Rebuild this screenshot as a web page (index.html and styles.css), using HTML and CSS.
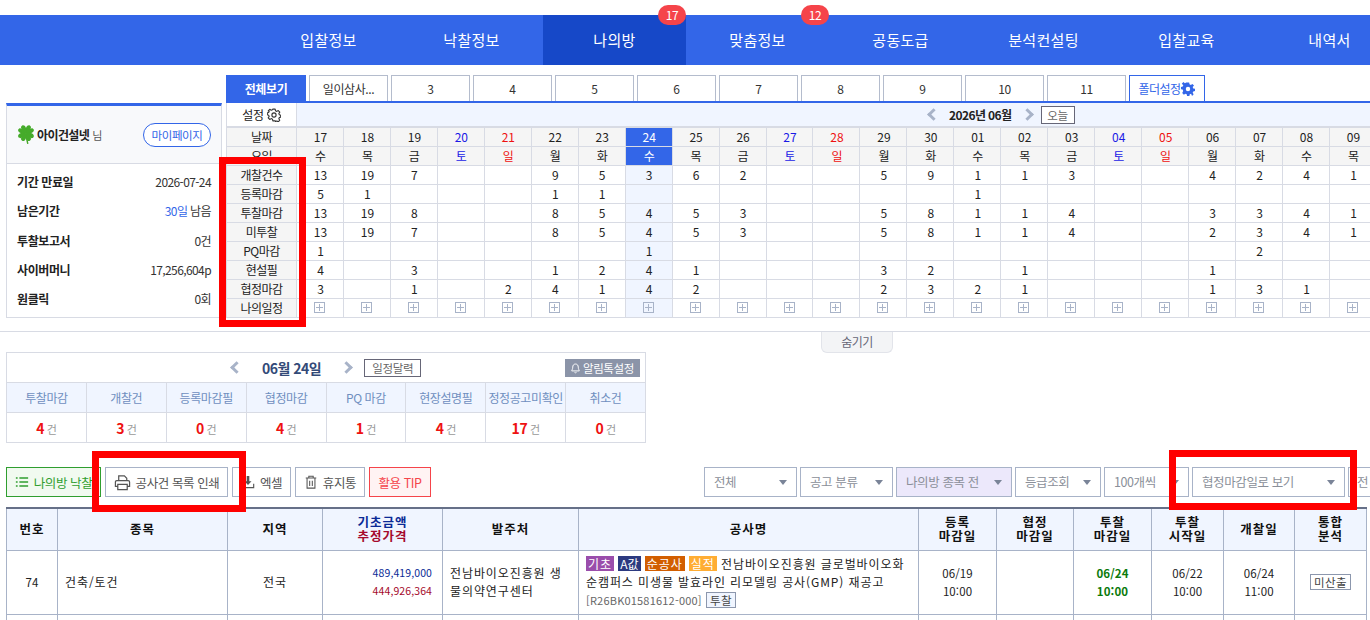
FILE: index.html
```html
<!DOCTYPE html>
<html lang="ko">
<head>
    <meta charset="UTF-8">
    <meta name="viewport" content="width=device-width, initial-scale=1.0">
    <title>나의방</title>
    <link rel="stylesheet" href="styles.css">
</head>
<body>
    <nav class="gnb">
        <a class="gnb-item">입찰정보</a>
        <a class="gnb-item">낙찰정보</a>
        <a class="gnb-item active">나의방<span class="gnb-badge">17</span></a>
        <a class="gnb-item">맞춤정보<span class="gnb-badge">12</span></a>
        <a class="gnb-item">공동도급</a>
        <a class="gnb-item">분석컨설팅</a>
        <a class="gnb-item">입찰교육</a>
        <a class="gnb-item">내역서</a>
    </nav>

    <section class="top">
        <aside class="profile">
            <div class="profile-head">
                <svg class="clover" viewBox="-10 -10 20 23" width="18" height="21">
                    <path d="M0 0 Q.5 6 2 12" fill="none" stroke="#4aa82c" stroke-width="1.600"/>
                    <g fill="#45ab2a">
                        <path transform="rotate(45)" d="M0 0C-5-3-6-8-3-9-1.500-9.500 0-8.500 0-7 0-8.500 1.500-9.500 3-9 6-8 5-3 0 0z"/>
                        <path transform="rotate(135)" d="M0 0C-5-3-6-8-3-9-1.500-9.500 0-8.500 0-7 0-8.500 1.500-9.500 3-9 6-8 5-3 0 0z"/>
                        <path transform="rotate(225)" d="M0 0C-5-3-6-8-3-9-1.500-9.500 0-8.500 0-7 0-8.500 1.500-9.500 3-9 6-8 5-3 0 0z"/>
                        <path transform="rotate(315)" d="M0 0C-5-3-6-8-3-9-1.500-9.500 0-8.500 0-7 0-8.500 1.500-9.500 3-9 6-8 5-3 0 0z"/>
                    </g>
                </svg>
                <strong class="profile-name">아이건설넷</strong>
                <span class="profile-sir">님</span>
                <a class="mypage-btn">마이페이지</a>
            </div>
            <dl class="profile-list">
                <div class="profile-row"><dt>기간 만료일</dt><dd>2026-07-24</dd></div>
                <div class="profile-row"><dt>남은기간</dt><dd><span class="blue-txt">30일</span> 남음</dd></div>
                <div class="profile-row"><dt>투찰보고서</dt><dd>0건</dd></div>
                <div class="profile-row"><dt>사이버머니</dt><dd>17,256,604p</dd></div>
                <div class="profile-row"><dt>원클릭</dt><dd>0회</dd></div>
            </dl>
        </aside>

        <div class="calendar-wrap">
            <div class="tabs">
                <a class="tab on">전체보기</a>
                <a class="tab">일이삼사...</a>
                <a class="tab">3</a>
                <a class="tab">4</a>
                <a class="tab">5</a>
                <a class="tab">6</a>
                <a class="tab">7</a>
                <a class="tab">8</a>
                <a class="tab">9</a>
                <a class="tab">10</a>
                <a class="tab">11</a>
                <a class="tab folder">폴더설정
                    <svg viewBox="0 0 24 24" width="14" height="14"><path fill="#3366e8" fill-rule="evenodd" d="M10 1h4l.6 3 2.300 1 2.600-1.700 2.800 2.800L20 8.700l1 2.300 3 .6v4l-3 .6-1 2.300 1.700 2.600-2.800 2.800L17.300 20l-2.300 1-.6 3h-4l-.6-3-2.300-1-2.600 1.700-2.800-2.800L3.800 15.300l-1-2.300-2.800-.6v-4l3-.6 1-2.300L1.300 3l2.800-2.800L6.700 2l2.300-1zM12 8.200a3.800 3.800 0 1 0 0 7.600 3.800 3.800 0 0 0 0-7.600z"/></svg>
                </a>
            </div>
            <div class="cal-scroll">
                <div class="cal-bar">
                    <div class="cal-setting">설정
                        <svg viewBox="0 0 24 24" width="14" height="14"><path fill="none" stroke="#333" stroke-width="1.900" stroke-linejoin="round" d="M10 2h4l.6 2.800 2.200 1 2.500-1.500 2.600 2.800-1.600 2.400.9 2.200 2.300.6v3.400l-2.300.6-.9 2.200 1.600 2.400-2.600 2.800-2.500-1.500-2.200 1L14 22h-4l-.6-2.800-2.200-1-2.500 1.500-2.600-2.800 1.600-2.400-.9-2.200-2.300-.6v-3.400l2.300-.6.900-2.200L2.100 5.100l2.600-2.800 2.500 1.500 2.200-1z"/><circle cx="12" cy="12" r="3.600" fill="none" stroke="#333" stroke-width="1.900"/></svg>
                    </div>
                    <div class="cal-month">
                        <span class="arrow"></span>
                        <strong class="cal-title">2026년 06월</strong>
                        <span class="arrow next"></span>
                        <a class="box-btn">오늘</a>
                    </div>
                </div>
                <table class="cal">
                    <colgroup><col class="cal-label-col"></colgroup>
                    <tr class="cal-head">
                        <th>날짜</th><td>17</td><td>18</td><td>19</td><td class="sat">20</td><td class="sun">21</td><td>22</td><td>23</td><td class="today">24</td><td>25</td><td>26</td><td class="sat">27</td><td class="sun">28</td><td>29</td><td>30</td><td>01</td><td>02</td><td>03</td><td class="sat">04</td><td class="sun">05</td><td>06</td><td>07</td><td>08</td><td>09</td>
                    </tr>
                    <tr class="cal-head">
                        <th>요일</th><td>수</td><td>목</td><td>금</td><td class="sat">토</td><td class="sun">일</td><td>월</td><td>화</td><td class="today">수</td><td>목</td><td>금</td><td class="sat">토</td><td class="sun">일</td><td>월</td><td>화</td><td>수</td><td>목</td><td>금</td><td class="sat">토</td><td class="sun">일</td><td>월</td><td>화</td><td>수</td><td>목</td>
                    </tr>
                    <tr>
                        <th>개찰건수</th><td>13</td><td>19</td><td>7</td><td></td><td></td><td>9</td><td>5</td><td class="now">3</td><td>6</td><td>2</td><td></td><td></td><td>5</td><td>9</td><td>1</td><td>1</td><td>3</td><td></td><td></td><td>4</td><td>2</td><td>4</td><td>1</td>
                    </tr>
                    <tr>
                        <th>등록마감</th><td>5</td><td>1</td><td></td><td></td><td></td><td>1</td><td>1</td><td class="now"></td><td></td><td></td><td></td><td></td><td></td><td></td><td>1</td><td></td><td></td><td></td><td></td><td></td><td></td><td></td><td></td>
                    </tr>
                    <tr>
                        <th>투찰마감</th><td>13</td><td>19</td><td>8</td><td></td><td></td><td>8</td><td>5</td><td class="now">4</td><td>5</td><td>3</td><td></td><td></td><td>5</td><td>8</td><td>1</td><td>1</td><td>4</td><td></td><td></td><td>3</td><td>3</td><td>4</td><td>1</td>
                    </tr>
                    <tr>
                        <th>미투찰</th><td>13</td><td>19</td><td>7</td><td></td><td></td><td>8</td><td>5</td><td class="now">4</td><td>5</td><td>3</td><td></td><td></td><td>5</td><td>8</td><td>1</td><td>1</td><td>4</td><td></td><td></td><td>2</td><td>3</td><td>4</td><td>1</td>
                    </tr>
                    <tr>
                        <th>PQ마감</th><td>1</td><td></td><td></td><td></td><td></td><td></td><td></td><td class="now">1</td><td></td><td></td><td></td><td></td><td></td><td></td><td></td><td></td><td></td><td></td><td></td><td></td><td>2</td><td></td><td></td>
                    </tr>
                    <tr>
                        <th>현설필</th><td>4</td><td></td><td>3</td><td></td><td></td><td>1</td><td>2</td><td class="now">4</td><td>1</td><td></td><td></td><td></td><td>3</td><td>2</td><td></td><td>1</td><td></td><td></td><td></td><td>1</td><td></td><td></td><td></td>
                    </tr>
                    <tr>
                        <th>협정마감</th><td>3</td><td></td><td>1</td><td></td><td>2</td><td>4</td><td>1</td><td class="now">4</td><td>2</td><td></td><td></td><td></td><td>2</td><td>3</td><td>2</td><td>1</td><td></td><td></td><td></td><td>1</td><td>3</td><td>1</td><td></td>
                    </tr>
                    <tr class="cal-plus">
                        <th>나의일정</th><td><i class="plus"></i></td><td><i class="plus"></i></td><td><i class="plus"></i></td><td><i class="plus"></i></td><td><i class="plus"></i></td><td><i class="plus"></i></td><td><i class="plus"></i></td><td class="now"><i class="plus"></i></td><td><i class="plus"></i></td><td><i class="plus"></i></td><td><i class="plus"></i></td><td><i class="plus"></i></td><td><i class="plus"></i></td><td><i class="plus"></i></td><td><i class="plus"></i></td><td><i class="plus"></i></td><td><i class="plus"></i></td><td><i class="plus"></i></td><td><i class="plus"></i></td><td><i class="plus"></i></td><td><i class="plus"></i></td><td><i class="plus"></i></td><td><i class="plus"></i></td>
                    </tr>
                </table>
            </div>
        </div>
    </section>

    <div class="hide-line"><a class="hide-btn">숨기기</a></div>

    <section class="today-box">
        <div class="today-head">
            <span class="arrow"></span>
            <strong class="today-title">06월 24일</strong>
            <span class="arrow next"></span>
            <a class="box-btn">일정달력</a>
            <a class="alarm-btn">
                <svg viewBox="0 0 16 16" width="11" height="11"><path fill="none" stroke="#fff" stroke-width="1.400" d="M8 1.500c-2.700 0-4 2-4 4.500 0 3-1.500 4.500-1.500 5.500h11c0-1-1.500-2.500-1.500-5.500 0-2.500-1.300-4.500-4-4.500zM6.500 13.500c.4 1 2.600 1 3 0"/></svg>
                알림톡설정
            </a>
        </div>
        <table class="today-table">
            <tr>
                <th>투찰마감</th><th>개찰건</th><th>등록마감필</th><th>협정마감</th><th>PQ 마감</th><th>현장설명필</th><th>정정공고미확인</th><th>취소건</th>
            </tr>
            <tr>
                <td><b>4</b> 건</td><td><b>3</b> 건</td><td><b>0</b> 건</td><td><b>4</b> 건</td><td><b>1</b> 건</td><td><b>4</b> 건</td><td><b>17</b> 건</td><td><b>0</b> 건</td>
            </tr>
        </table>
    </section>

    <section class="toolbar">
        <div class="tool-left">
            <a class="tool-btn green">
                <svg viewBox="0 0 16 16" width="14" height="14"><path fill="none" stroke="#2f9e2f" stroke-width="1.800" d="M1 3.500h2M5 3.500h10M1 8h2M5 8h10M1 12.500h2M5 12.500h10"/></svg>
                나의방 낙찰
            </a>
            <a class="tool-btn print">
                <svg viewBox="0 0 18 18" width="17" height="17"><path fill="none" stroke="#555" stroke-width="1.300" d="M5 7V2h6l2.500 2.500V7M3.500 13H1.500V8.500q0-1.500 1.500-1.500h12q1.500 0 1.500 1.500V13h-2M4 11h10v5.500H4z"/></svg>
                공사건 목록 인쇄
            </a>
            <a class="tool-btn excel">
                <svg viewBox="0 0 16 16" width="14" height="14"><path fill="none" stroke="#555" stroke-width="1.300" d="M1.500 10v4.500h13V10"/><path fill="#555" d="M6.500 1h3v6h2.500L8 11.500 4 7h2.500z"/></svg>
                엑셀
            </a>
            <a class="tool-btn trash">
                <svg viewBox="0 0 16 16" width="14" height="14"><path fill="none" stroke="#555" stroke-width="1.200" d="M2 3.500h12M5.500 3.500V1.500h5v2M3.500 3.500v11.500h9V3.500M6.500 6.500v6M9.500 6.500v6"/></svg>
                휴지통
            </a>
            <a class="tool-btn tip">활용 TIP</a>
        </div>
        <div class="tool-right">
            <div class="sel w93">전체</div>
            <div class="sel w93">공고 분류</div>
            <div class="sel w115 violet">나의방 종목 전</div>
            <div class="sel w86">등급조회</div>
            <div class="sel w85">100개씩</div>
            <div class="sel w153">협정마감일로 보기</div>
            <div class="sel w60">전</div>
        </div>
    </section>

    <table class="list">
        <colgroup>
            <col class="c51"><col class="c170"><col class="c95"><col class="c120"><col class="c136"><col class="c340"><col class="c78"><col class="c77"><col class="c78"><col class="c72"><col class="c71"><col class="c72">
        </colgroup>
        <tr>
            <th>번호</th><th>종목</th><th>지역</th>
            <th><span class="navy-txt">기초금액</span><br><span class="wine-txt">추정가격</span></th>
            <th>발주처</th><th>공사명</th>
            <th>등록<br>마감일</th><th>협정<br>마감일</th><th>투찰<br>마감일</th><th>투찰<br>시작일</th><th>개찰일</th><th>통합<br>분석</th>
        </tr>
        <tr class="list-row">
            <td>74</td>
            <td class="left">건축/토건</td>
            <td class="wide">전국</td>
            <td class="price"><span class="navy-txt">489,419,000</span><br><span class="wine-txt">444,926,364</span></td>
            <td class="left">전남바이오진흥원 생물의약연구센터</td>
            <td class="left title">
                <span class="tag t-purple">기초</span> <span class="tag t-navy">A값</span> <span class="tag t-brown">순공사</span> <span class="tag t-orange">실적</span> 전남바이오진흥원 글로벌바이오화순캠퍼스 미생물 발효라인 리모델링 공사(GMP) 재공고<br>
                <span class="bid-no">[R26BK01581612-000]</span> <span class="bid-tag">투찰</span>
            </td>
            <td>06/19<br>10:00</td>
            <td></td>
            <td class="due">06/24<br>10:00</td>
            <td>06/22<br>10:00</td>
            <td>06/24<br>11:00</td>
            <td><span class="bid-tag plain">미산출</span></td>
        </tr>
        <tr class="list-row">
            <td></td><td></td><td></td><td></td><td></td><td></td><td></td><td></td><td></td><td></td><td></td><td></td>
        </tr>
    </table>

    <!-- 빨간 표시 -->
    <div class="mark mark-a"></div>
    <div class="mark mark-b"></div>
    <div class="mark mark-c"></div>
</body>
</html>
```

FILE: styles.css
```css
* {
    margin: 0;
    padding: 0;
    box-sizing: border-box;
    font-family: "Noto Sans CJK KR", "Noto Sans", sans-serif;
}
html, body {
    width: 1370px;
    height: 620px;
    overflow: hidden;
}
body {
    position: relative;
    background: #fff;
    color: #222;
    font-size: 12px;
    letter-spacing: -0.4px;
}
table {
    border-collapse: collapse;
    table-layout: fixed;
}

/* gnb */
.gnb {
    display: flex;
    margin-top: 15px;
    height: 50px;
    padding-left: 257px;
    background: #3366e8;
}
.gnb-item {
    position: relative;
    flex: 0 0 143px;
    line-height: 50px;
    text-align: center;
    color: #fff;
    font-size: 15px;
    letter-spacing: 0.3px;
}
.gnb-item.active {
    background: #1648c8;
}
.gnb-badge {
    position: absolute;
    top: -10px;
    right: 0;
    width: 28px;
    height: 20px;
    border-radius: 10px;
    background: #f5444a;
    color: #fff;
    font-size: 12px;
    line-height: 20px;
    letter-spacing: -0.5px;
}

/* top */
.top {
    display: flex;
    padding: 10px 0 0 6px;
    height: 266px;
}
.profile {
    flex: 0 0 216px;
    height: 215px;
    margin-top: 28px;
    border: 1px solid #d8dbe4;
    border-top: 3px solid #3366e8;
}
.profile-head {
    display: flex;
    align-items: center;
    height: 58px;
    padding: 0 10px;
    background: #f8f9fb;
    border-bottom: 1px solid #d8dbe4;
}
.clover {
    margin-right: 2px;
}
.profile-name {
    font-size: 12px;
    font-weight: 700;
    letter-spacing: -0.6px;
}
.profile-sir {
    margin-left: 3px;
    color: #555;
    font-size: 11px;
}
.mypage-btn {
    margin-left: auto;
    width: 68px;
    height: 24px;
    border: 1px solid #3366e8;
    border-radius: 12px;
    background: #fff;
    color: #3366e8;
    font-size: 11.5px;
    line-height: 22px;
    text-align: center;
}
.profile-list {
    padding: 3px 10px 0;
}
.profile-row {
    display: flex;
    justify-content: space-between;
    align-items: center;
    height: 29.3px;
}
.profile-row dt {
    font-weight: 700;
    color: #222;
}
.profile-row dd {
    color: #333;
    letter-spacing: -0.6px;
}
.blue-txt {
    color: #3366e8;
}

/* tabs */
.calendar-wrap {
    flex: 1;
    min-width: 0;
    margin-left: 4px;
    overflow: hidden;
}
.tabs {
    display: flex;
    gap: 3px;
    height: 28px;
    border-bottom: 2px solid #3366e8;
}
.tab {
    flex: 0 0 79px;
    height: 26px;
    border: 1px solid #b4bccd;
    border-bottom: 0;
    color: #333;
    line-height: 25px;
    text-align: center;
}
.tab.on {
    flex-basis: 80px;
    border-color: #3366e8;
    background: #3366e8;
    color: #fff;
    font-weight: 700;
}
.tab.folder {
    flex-basis: 76px;
    display: flex;
    align-items: center;
    justify-content: center;
    gap: 1px;
    border-color: #3366e8;
    color: #3366e8;
    letter-spacing: -0.6px;
}
.cal-bar {
    display: flex;
    height: 24px;
    border-bottom: 1px solid #d8dbe4;
}
.cal-setting {
    display: flex;
    align-items: center;
    justify-content: center;
    gap: 3px;
    flex: 0 0 71px;
    background: #fff;
    border-left: 1px solid #d8dbe4;
    border-right: 1px solid #d8dbe4;
}
.cal-month {
    flex: 1;
    display: flex;
    align-items: center;
    padding-left: 632px;
    gap: 11px;
    background: #f0f5ff;
}
.cal-month .box-btn {
    margin-left: -2px;
}
.cal-title {
    flex-shrink: 0;
    font-size: 12px;
    letter-spacing: -0.6px;
    color: #222;
}
.arrow {
    flex-shrink: 0;
    width: 9px;
    height: 9px;
    border-left: 3px solid #a8b3c8;
    border-bottom: 3px solid #a8b3c8;
    transform: rotate(45deg);
}
.arrow.next {
    transform: rotate(225deg);
}
.box-btn {
    flex-shrink: 0;
    width: 34px;
    height: 18px;
    border: 1px solid #667;
    background: #fff;
    color: #666;
    font-size: 11.5px;
    line-height: 16px;
    text-align: center;
}

/* calendar */
.cal {
    width: 1151px;
}
.cal col {
    width: 47px;
}
.cal .cal-label-col {
    width: 70px;
}
.cal th, .cal td {
    height: 19px;
    border: 1px solid #d8dbe4;
    font-size: 12px;
    font-weight: 400;
    line-height: 16px;
    text-align: center;
    letter-spacing: 0;
    overflow: hidden;
    padding: 0;
}
.cal td {
    padding-left: 1px;
}
.cal th {
    background: #f5f5f5;
    letter-spacing: -0.5px;
}
.cal-head td {
    background: #f5f5f5;
}
.cal-head td.today {
    background: #3366e8;
    color: #fff;
}
.cal-head td.sat {
    color: #1a1ae6;
}
.cal-head td.sun {
    color: #ee1111;
}
.cal td.now {
    background: #f0f5ff;
}
.plus {
    display: block;
    position: relative;
    width: 11px;
    height: 11px;
    margin: 0 auto 1px;
    border: 1px solid #a8b3c8;
    transform: translateX(-1px);
}
.plus::before, .plus::after {
    content: "";
    position: absolute;
    background: #a8b3c8;
}
.plus::before {
    left: 1px;
    right: 1px;
    top: 4px;
    height: 1px;
}
.plus::after {
    top: 1px;
    bottom: 1px;
    left: 4px;
    width: 1px;
}

/* hide */
.hide-line {
    height: 21px;
    border-top: 1px solid #d8dbe4;
    display: flex;
    justify-content: flex-start;
    padding-left: 821px;
}
.hide-btn {
    width: 72px;
    height: 21px;
    border: 1px solid #e2e4ea;
    border-top: 0;
    border-radius: 0 0 6px 6px;
    background: #f3f4f6;
    color: #667;
    font-size: 12px;
    letter-spacing: -0.6px;
    line-height: 19px;
    text-align: center;
}

/* today */
.today-box {
    width: 640px;
    height: 91px;
    margin-left: 6px;
    border: 1px solid #d8dbe4;
    border-bottom: 0;
}
.today-head {
    position: relative;
    display: flex;
    align-items: center;
    gap: 21px;
    height: 29px;
    padding-left: 225px;
}
.today-title {
    flex-shrink: 0;
    color: #334a78;
    font-size: 14px;
    letter-spacing: -0.5px;
}
.today-head .box-btn {
    width: 57px;
    margin-left: -8px;
}
.alarm-btn {
    position: absolute;
    right: 5px;
    top: 6px;
    display: flex;
    align-items: center;
    gap: 2px;
    width: 75px;
    height: 18px;
    padding-left: 5px;
    background: #8b94a8;
    color: #fff;
    font-size: 11.5px;
    letter-spacing: -0.4px;
}
.today-table {
    width: 640px;
    margin-left: -1px;
}
.today-table th, .today-table td {
    height: 30px;
    border: 1px solid #d8dbe4;
    text-align: center;
}
.today-table th {
    background: #f0f5ff;
    color: #6f8fc0;
    font-size: 12px;
    font-weight: 400;
}
.today-table td {
    color: #999;
    font-size: 11px;
}
.today-table b {
    color: #ee1111;
    font-size: 14px;
}

/* toolbar */
.toolbar {
    display: flex;
    justify-content: space-between;
    height: 30px;
    margin: 24px 0 10px 6px;
}
.tool-left, .tool-right {
    display: flex;
}
.tool-left {
    gap: 4px;
}
.tool-right {
    gap: 3px;
    width: 666px;
    flex: 0 0 666px;
    overflow: hidden;
}
.tool-btn {
    display: flex;
    align-items: center;
    justify-content: center;
    gap: 5px;
    height: 30px;
    border: 1px solid #a8b3c8;
    color: #555;
    font-size: 12.5px;
}
.tool-btn.green {
    width: 95px;
    border-color: #2f9e2f;
    background: #f1faf0;
    color: #2f9e2f;
    white-space: nowrap;
}
.tool-btn.print {
    width: 123px;
}
.tool-btn.excel {
    width: 59px;
}
.tool-btn.trash {
    width: 70px;
}
.tool-btn.tip {
    width: 62px;
    border-color: #f5444a;
    background: #fff3f3;
    color: #f5444a;
}
.sel {
    position: relative;
    flex-shrink: 0;
    height: 30px;
    padding-left: 9px;
    border: 1px solid #a8b3c8;
    color: #8a8f99;
    font-size: 12.5px;
    line-height: 28px;
    white-space: nowrap;
}
.sel::after {
    content: "";
    position: absolute;
    right: 9px;
    top: 12px;
    border: 4px solid transparent;
    border-top: 5px solid #7a8498;
    border-bottom: 0;
}
.sel.violet {
    background: #ece8fb;
}
.w93 { width: 93px; }
.w115 { width: 116px; }
.w86 { width: 86px; }
.w85 { width: 85px; }
.w153 { width: 153px; }
.w60 { width: 60px; padding-left: 8px; }

/* list */
.list {
    width: 1360px;
    margin-left: 6px;
}
.c51 { width: 51px; }
.c170 { width: 170px; }
.c95 { width: 95px; }
.c120 { width: 120px; }
.c136 { width: 136px; }
.c340 { width: 340px; }
.c78 { width: 78px; }
.c77 { width: 77px; }
.c72 { width: 72px; }
.c71 { width: 71px; }
.list th, .list td {
    border: 1px solid #a8b3c8;
    text-align: center;
    padding: 0;
}
.list th {
    height: 42px;
    border-top: 2px solid #667088;
    background: #f0f5ff;
    color: #111;
    font-size: 12.5px;
    line-height: 14px;
    font-weight: 700;
    letter-spacing: 1px;
}
.list-row td {
    height: 64px;
    font-size: 11.5px;
    line-height: 18px;
    letter-spacing: 0.1px;
    color: #222;
}
.list-row td.left, .list-row td.wide {
    font-size: 12px;
    letter-spacing: 0.9px;
}
.list-row td.left {
    padding: 0 6px 0 7px;
    text-align: left;
}
.list-row td.price {
    padding-right: 10px;
    text-align: right;
    font-size: 10.5px;
}
.navy-txt {
    color: #0a2a96;
}
.wine-txt {
    color: #a50a2c;
}
.tag {
    display: inline-block;
    height: 15px;
    padding: 0 2px;
    color: #fff;
    line-height: 15px;
    letter-spacing: 0.9px;
}
.t-purple { background: #9a4dab; }
.t-navy { background: #2c3a80; letter-spacing: 0; }
.t-brown { background: #d25e00; }
.t-orange { background: #ffad33; }
.bid-no {
    color: #666;
    font-size: 11px;
    letter-spacing: 0.2px;
}
.bid-tag {
    display: inline-block;
    height: 16px;
    padding: 0 3px;
    border: 1px solid #8c97ad;
    background: #f0f5ff;
    color: #444;
    font-size: 11.5px;
    line-height: 14px;
    letter-spacing: 0.5px;
}
.bid-tag.plain {
    background: #fff;
}
.list-row td.due {
    color: #0b7a0b;
    font-weight: 700;
}

/* annotation */
.mark {
    position: absolute;
    border: 7px solid #f00;
    pointer-events: none;
}
.mark-a {
    left: 219px;
    top: 157px;
    width: 87px;
    height: 170px;
}
.mark-b {
    left: 92px;
    top: 451px;
    width: 154px;
    height: 61px;
}
.mark-c {
    left: 1169px;
    top: 450px;
    width: 188px;
    height: 60px;
}
```
